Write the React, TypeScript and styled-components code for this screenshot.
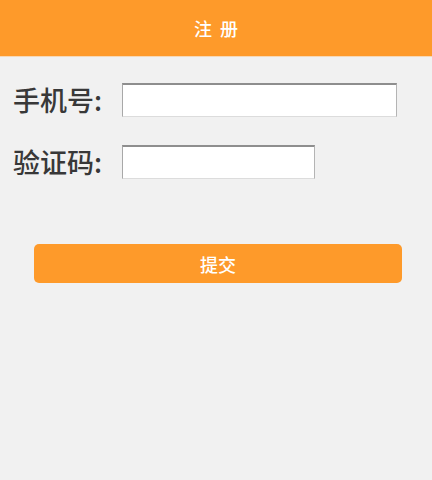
import React from 'react';
import styled, { createGlobalStyle } from 'styled-components';

const GlobalStyle = createGlobalStyle`
  html, body {
    margin: 0;
    padding: 0;
    background: #f1f1f1;
    font-family: "Noto Sans CJK SC", "Noto Sans", sans-serif;
  }
`;

const Page = styled.div`
  width: 432px;
  height: 480px;
  background: #f1f1f1;
  display: flex;
  flex-direction: column;
`;

const Header = styled.div`
  height: 57px;
  background: #fe9a2a;
  color: #fff;
  font-size: 18px;
  font-weight: 500;
  display: flex;
  align-items: center;
  justify-content: center;
  letter-spacing: 2px;
  padding-left: 2px;
  border-bottom: 1px solid #f7d8b5;
  box-sizing: border-box;
`;

const Form = styled.div`
  display: flex;
  flex-direction: column;
  gap: 28px;
  padding: 26px 0 0 13px;
`;

const Row = styled.div`
  display: flex;
  align-items: center;
  height: 34px;
`;

const Label = styled.label`
  font-size: 27px;
  font-weight: 500;
  color: #383838;
  width: 109px;
  line-height: 34px;
  white-space: nowrap;
`;

const Input = styled.input<{ w: number }>`
  width: ${p => p.w}px;
  height: 34px;
  box-sizing: border-box;
  background: #fff;
  border-top: 2px solid #8e8e8e;
  border-left: 1px solid #a8a8a8;
  border-right: 1px solid #b4b4b4;
  border-bottom: 1px solid #dcdcdc;
  outline: none;
  padding: 0 4px;
`;

const Submit = styled.button`
  margin: 65px 30px 0 34px;
  height: 39px;
  background: #fe9a2a;
  border: none;
  border-radius: 5px;
  color: #fff;
  font-size: 18px;
  font-weight: 500;
  font-family: "Noto Sans CJK SC", "Noto Sans", sans-serif;
`;

export default function App() {
  return (
    <Page>
      <GlobalStyle />
      <Header>注 册</Header>
      <Form>
        <Row>
          <Label>手机号:</Label>
          <Input w={275} type="text" />
        </Row>
        <Row>
          <Label>验证码:</Label>
          <Input w={193} type="text" />
        </Row>
      </Form>
      <Submit>提交</Submit>
    </Page>
  );
}
